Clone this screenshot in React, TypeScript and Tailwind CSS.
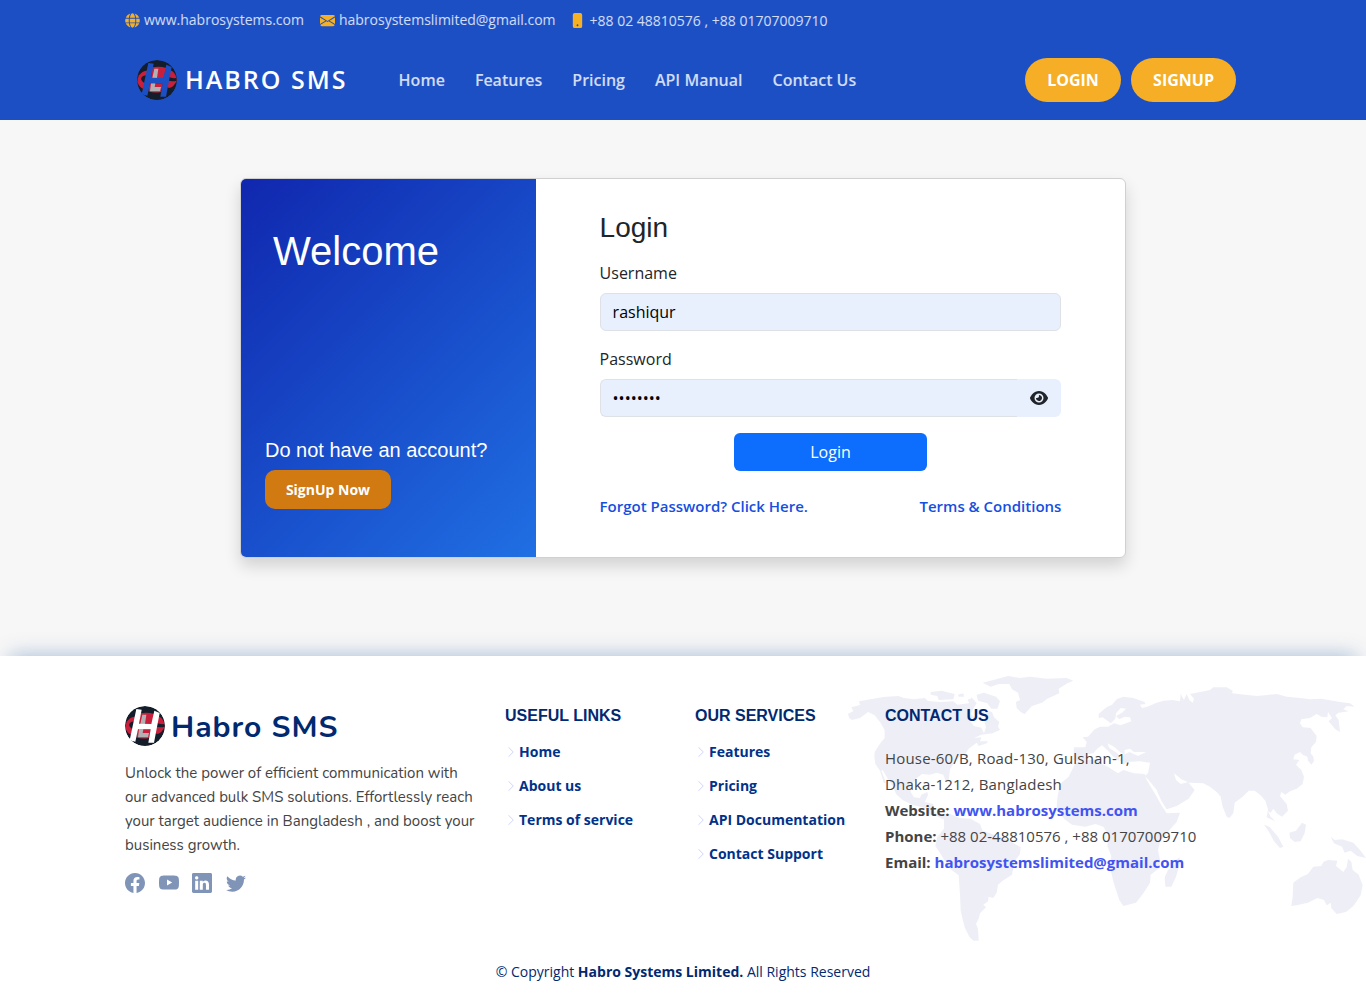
import React from "react";
import { FaGlobe } from "react-icons/fa";
import { FaEye } from "react-icons/fa6";
import {
  BsChevronRight,
  BsEnvelopeFill,
  BsFacebook,
  BsLinkedin,
  BsPhoneFill,
  BsTwitter,
  BsYoutube,
} from "react-icons/bs";

function Logo({ id }: { id: string }) {
  return (
    <svg viewBox="0 0 120 120" className="size-10 shrink-0">
      <defs>
        <mask id={id}>
          <circle cx="60" cy="60" r="60" fill="#fff" />
          <path d="M34 9L50 11L42 53L79 54L88 14L104 21L87 110L70 110L77 70L39 70L31 107L14 103Z" fill="#000" />
        </mask>
      </defs>
      <g mask={`url(#${id})`}>
        <circle cx="60" cy="60" r="60" fill="#141e2a" />
        <path d="M28 32Q14 34 6 46Q1 56 1 66Q8 84 22 88L34 72V32Z" fill="#c8203c" />
        <path d="M92 28Q108 32 115 44Q120 56 119 62Q112 80 96 84L82 76L88 36Z" fill="#c8203c" />
        <path d="M30 46Q16 46 12 56Q14 66 26 70L30 60Z" fill="#141e2a" />
        <path d="M92 48Q100 56 118 54L119 62Q104 66 90 60Z" fill="#141e2a" />
        <path d="M46 22Q66 17 88 24L80 55H42ZM38 70H78L72 96Q52 100 34 94Z" fill="#c8203c" />
        <path d="M52 26H64L60 54H46ZM42 70H55L53 81H72L69 94H39Z" fill="#b1b1b4" />
      </g>
    </svg>
  );
}

function WorldMap() {
  return (
    <svg viewBox="0 48 1578 882" className="absolute right-0 top-0 h-[294px] w-[526px]" fill="#eeeef7">
      <path d="M24 222L40 213L34 202L60 195L57 184L100 176L130 171L175 168L192 174L222 178L254 174L264 183L300 186L340 184L352 194L386 190L394 172L410 190L400 206L392 222L404 232L388 240L402 258L424 263L432 280L438 262L432 240L442 212L456 216L462 232L478 246L474 260L480 270L458 280L424 284L402 294L424 292L420 304L444 304L440 310L416 318L410 308L386 326L376 342L358 352L340 372L330 388L326 424L318 426L310 404L290 398L270 404L246 402L228 416L214 436L212 456L222 472L240 474L244 464L262 456L264 466L254 486L280 492L278 514L290 522L314 522L330 530L308 538L290 528L270 524L256 504L216 494L188 480L168 462L160 442L142 414L128 390L124 392L138 428L132 430L120 392L106 372L103 350L104 336L122 308L134 294L134 270L120 246L104 226L84 216L60 234L36 240L28 234Z" />
      <path d="M272 156L304 152L344 162L340 178L296 180L292 168L272 164ZM354 164L370 160L372 170L356 170ZM410 164L432 158L468 170L480 184L472 206L454 206L442 190L414 182ZM408 208L428 208L434 220L418 226L406 218ZM386 176L404 180L398 188L382 184Z" />
      <path d="M428 128L460 120L504 108L540 114L570 110L620 116L680 114L700 122L682 130L656 146L658 160L622 176L606 188L576 198L554 222L542 216L530 204L528 186L540 180L534 158L516 148L508 132L476 132L452 140Z" />
      <path d="M312 528L330 522L358 534L392 536L420 552L428 572L462 584L500 598L542 622L540 642L524 664L516 704L488 722L474 734L470 758L460 774L446 770L444 784L430 794L438 802L420 820L416 836L408 852L414 866L416 902L400 902L388 890L374 862L368 838L362 812L360 764L356 706L332 688L314 662L302 642L286 618L292 590L312 566Z" />
      <path d="M776 222L792 208L802 200L816 194L830 178L850 170L880 174L914 186L916 192L900 194L906 204L922 200L950 188L972 182L998 180L1020 184L1022 162L1032 180L1040 162L1048 180L1058 188L1062 176L1050 162L1070 158L1110 150L1120 142L1160 142L1178 152L1176 160L1214 164L1252 168L1310 162L1340 170L1380 174L1410 178L1444 176L1500 186L1530 190L1544 200L1520 198L1510 208L1526 214L1496 218L1486 226L1496 240L1500 276L1486 268L1466 244L1476 234L1464 216L1462 232L1444 230L1430 222L1410 234L1384 238L1380 250L1388 262L1412 264L1430 288L1428 306L1414 322L1412 340L1420 350L1422 364L1414 374L1404 362L1402 350L1388 344L1380 336L1364 344L1360 358L1378 360L1368 374L1384 390L1392 410L1388 432L1370 446L1350 454L1336 464L1324 456L1320 468L1340 492L1344 512L1326 530L1310 520L1300 506L1292 518L1284 514L1292 530L1306 544L1280 532L1284 508L1276 482L1262 466L1244 452L1226 452L1208 470L1184 488L1180 520L1168 534L1160 530L1148 500L1142 470L1130 456L1110 440L1090 430L1048 428L1024 418L1002 400L1008 420L1022 432L1044 426L1064 450L1046 476L1010 498L980 508L964 482L950 450L926 420L914 408L924 400L930 368L898 364L862 366L850 374L840 360L850 346L868 336L894 348L918 336L882 336L870 326L854 330L854 344L840 336L822 320L802 310L808 324L832 340L840 350L836 362L820 350L804 332L786 316L772 326L760 340L744 342L734 364L716 364L700 360L702 322L736 322L740 306L728 292L744 290L764 268L780 260L804 260L822 250L842 256L858 250L874 244L870 232L854 230L838 238L828 228L846 218L858 206L842 204L828 220L826 236L812 250L796 238L788 232L776 234Z" />
      <path d="M706 370L726 362L774 356L782 370L806 382L834 400L850 390L882 400L914 402L920 420L944 460L962 492L980 520L1020 518L1010 546L980 580L960 606L954 630L960 660L958 684L932 704L930 728L910 760L888 788L850 798L838 780L826 744L820 724L810 682L814 648L802 618L804 584L790 560L766 552L736 560L696 554L672 536L650 502L652 474L660 432L686 410Z" />
      <path d="M1018 652L1020 670L1008 710L994 740L976 740L974 712L984 690L1002 676L1008 660Z" />
      <path d="M1272 554L1288 560L1314 590L1330 620L1320 624L1302 604L1286 574ZM1348 578L1368 572L1386 548L1398 554L1394 580L1382 604L1364 606L1350 594ZM1472 590L1484 600L1506 598L1540 608L1560 630L1578 654L1552 648L1532 632L1514 638L1506 620L1482 610Z" />
      <path d="M1360 728L1382 712L1404 702L1420 680L1444 678L1450 666L1464 660L1492 662L1488 678L1510 696L1520 682L1524 656L1534 666L1538 690L1556 704L1568 736L1562 766L1540 798L1518 816L1490 822L1474 804L1472 788L1460 796L1452 780L1432 774L1404 788L1370 796L1354 798L1358 770Z" />
    </svg>
  );
}

function FooterLinks({ title, items }: { title: string; items: string[] }) {
  return (
    <div className="w-[190px]">
      <h4 className="font-['Liberation_Sans'] text-base leading-[19px] font-bold whitespace-nowrap text-[#012970]">{title}</h4>
      <ul className="mt-2.5">
        {items.map((item) => (
          <li key={item} className="flex h-[34px] items-center gap-0.5">
            <BsChevronRight className="size-3 text-[#d0d4fc]" />
            <a className="text-sm font-bold whitespace-nowrap text-[#013289]">{item}</a>
          </li>
        ))}
      </ul>
    </div>
  );
}

export default function App() {
  return (
    <div className="flex h-[1002px] flex-col overflow-hidden bg-[#f7f7f7] font-['Open_Sans',sans-serif] text-[#212529]">
      <header className="h-[120px] shrink-0 bg-[#1c4fc4] pl-[125px]">
        <div className="flex h-10 items-center text-sm text-white/80">
          <FaGlobe className="mr-1 size-[15px] text-[#f6b024]" />
          <span>www.habrosystems.com</span>
          <BsEnvelopeFill className="mr-1 ml-4 size-[15px] text-[#f6b024]" />
          <span>habrosystemslimited@gmail.com</span>
          <BsPhoneFill className="mr-[5px] ml-3.5 size-[15px] text-[#f6b024]" />
          <span className="mt-0.5">+88 02 48810576 , +88 01707009710</span>
        </div>
        <div className="flex h-20 items-center pr-[130px] pl-3">
          <Logo id="logo-header" />
          <span className="ml-2 w-[213.6px] text-[25px] font-semibold tracking-[2px] whitespace-nowrap text-white">HABRO SMS</span>
          <nav className="flex gap-[30px] text-base font-semibold whitespace-nowrap text-white/80">
            <a>Home</a>
            <a>Features</a>
            <a>Pricing</a>
            <a>API Manual</a>
            <a>Contact Us</a>
          </nav>
          <div className="ml-auto flex gap-2.5 text-base font-bold text-white">
            <button className="h-11 w-24 rounded-full bg-[#f5ae25]">LOGIN</button>
            <button className="h-11 w-[105px] rounded-full bg-[#f5ae25]">SIGNUP</button>
          </div>
        </div>
      </header>

      <main className="flex h-[536px] shrink-0 justify-center pt-[58px]">
        <div className="flex h-[380px] w-[886px] overflow-hidden rounded-md border border-[#d0d0d0] bg-white shadow-[0_8px_16px_rgba(0,0,0,0.15)]">
          <section className="flex w-[295px] flex-col items-start bg-linear-[135deg,#1027ae,#206fe3] px-6 pt-12 pb-12 font-['Liberation_Sans'] text-white">
            <h1 className="ml-2 text-[40px] leading-[48px]">Welcome</h1>
            <p className="mt-auto text-xl leading-6 whitespace-nowrap">Do not have an account?</p>
            <button className="mt-2 h-[39px] w-[126px] rounded-[10px] bg-[#d07a11] pt-px font-['Open_Sans'] text-sm font-bold">
              SignUp Now
            </button>
          </section>
          <form className="flex flex-1 flex-col px-[63.6px] pt-8">
            <h2 className="font-['Liberation_Sans'] text-[28px] leading-[34px]">Login</h2>
            <label className="mt-4 text-base leading-6">Username</label>
            <input
              className="mt-2 h-[38px] rounded-md border border-[#dee2e6] bg-[#e8f0fe] px-3 text-base text-black"
              defaultValue="rashiqur"
            />
            <label className="mt-4 text-base leading-6">Password</label>
            <div className="mt-2 flex h-[38px]">
              <input
                type="password"
                className="min-w-0 flex-1 rounded-l-md border border-r-0 border-[#dee2e6] bg-[#e8f0fe] px-3 text-base text-black"
                defaultValue="password"
              />
              <span className="flex w-11 items-center justify-center rounded-r-md bg-[#e8f0fe]">
                <FaEye className="size-[18px]" />
              </span>
            </div>
            <button type="button" className="mx-auto mt-4 h-[38px] w-[193px] rounded-md bg-[#0d6efd] text-base text-white">
              Login
            </button>
            <div className="mt-[23px] flex justify-between text-[15px] leading-6 font-semibold whitespace-nowrap text-[#154fe0]">
              <a>Forgot Password? Click Here.</a>
              <a>Terms &amp; Conditions</a>
            </div>
          </form>
        </div>
      </main>

      <footer className="relative flex-1 bg-white pt-[50px] shadow-[0_-10px_20px_-10px_rgba(1,73,153,0.35)]">
        <WorldMap />
        <div className="relative flex h-[237px] pl-[125px]">
          <div className="w-[380px]">
            <div className="flex h-10 items-center">
              <Logo id="logo-footer" />
              <span className="mt-0.5 ml-1.5 font-['Nunito','Open_Sans'] text-[30px] font-bold tracking-[1px] whitespace-nowrap text-[#012970]">
                Habro SMS
              </span>
            </div>
            <p className="mt-[15px] font-['Nunito','Open_Sans'] text-[15px] leading-6 whitespace-nowrap text-[#444]">
              Unlock the power of efficient communication with
              <br />
              our advanced bulk SMS solutions. Effortlessly reach
              <br />
              your target audience in Bangladesh , and boost your
              <br />
              business growth.
            </p>
            <div className="mt-4 flex gap-[13.6px] text-xl text-[#8094b8]">
              <BsFacebook />
              <BsYoutube />
              <BsLinkedin />
              <BsTwitter />
            </div>
          </div>
          <FooterLinks title="USEFUL LINKS" items={["Home", "About us", "Terms of service"]} />
          <FooterLinks title="OUR SERVICES" items={["Features", "Pricing", "API Documentation", "Contact Support"]} />
          <div className="whitespace-nowrap">
            <h4 className="font-['Liberation_Sans'] text-base leading-[19px] font-bold text-[#012970]">CONTACT US</h4>
            <p className="mt-5 text-[15px] leading-[26px] text-[#444]">
              <span className="font-medium tracking-[0.18px]">
                House-60/B, Road-130, Gulshan-1,
                <br />
                Dhaka-1212, Bangladesh
              </span>
              <br />
              <b>Website:</b> <a className="font-bold text-[#4154f1]">www.habrosystems.com</a>
              <br />
              <b>Phone:</b> +88 02-48810576 , +88 01707009710
              <br />
              <b>Email:</b> <a className="font-bold text-[#4154f1]">habrosystemslimited@gmail.com</a>
            </p>
          </div>
        </div>
        <p className="relative mt-[18px] text-center text-sm leading-[21px] text-[#012970]">
          © Copyright <b>Habro Systems Limited.</b> All Rights Reserved
        </p>
      </footer>
    </div>
  );
}
